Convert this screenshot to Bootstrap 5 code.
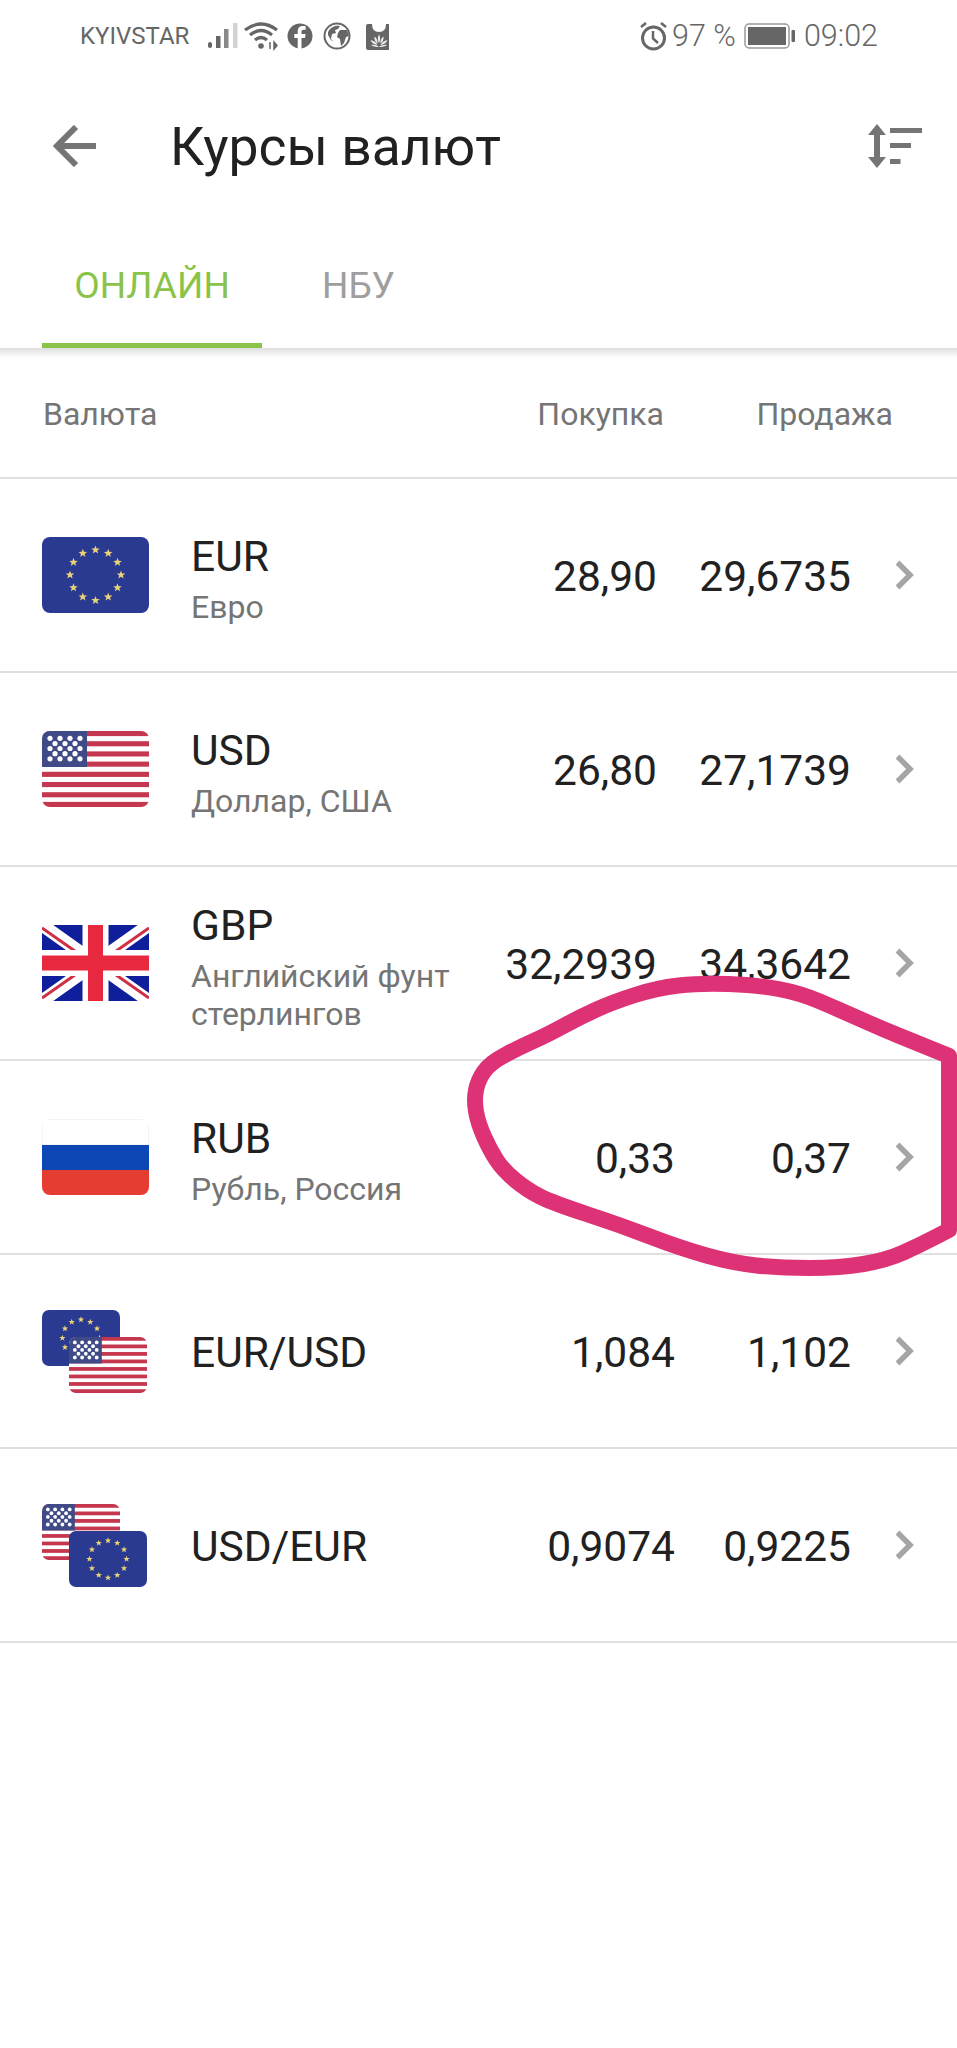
<!DOCTYPE html>
<html lang="ru">
<head>
  <meta charset="UTF-8" />
  <meta name="viewport" content="width=device-width, initial-scale=1.0" />
  <title>Курсы валют</title>
  <link href="https://cdn.jsdelivr.net/npm/bootstrap@5.3.2/dist/css/bootstrap.min.css" rel="stylesheet">
  <style>
    body {
      width: 957px;
      height: 2048px;
      overflow: hidden;
      position: relative;
      background: #fff;
      font-family: Roboto, "Liberation Sans", sans-serif;
      color: #212121;
    }
    .status-bar {
      height: 72px;
      padding: 0 79px 0 80px;
      color: #666;
      font-size: 30.5px;
      font-weight: 300;
    }
    .carrier { font-size: 24px; font-weight: 400; width: 120px; }
    .title-bar { height: 148px; padding: 0 35px 0 53px; }
    .title-text { font-size: 53.4px; font-weight: 400; margin: 0 0 0 74px; line-height: 1; padding-top: 2px; }
    .tab-strip {
      height: 128px;
      padding-left: 42px;
      position: relative;
    }
    .tab-strip::after {
      content: "";
      position: absolute;
      left: 0;
      right: 0;
      top: 100%;
      height: 10px;
      background: linear-gradient(rgba(0, 0, 0, .13), rgba(0, 0, 0, 0));
    }
    .tab-strip .nav-link {
      height: 128px;
      padding: 0;
      font-size: 37px;
      line-height: 132px;
      color: #9e9e9e;
    }
    .tab-strip .nav-link.active {
      width: 220px;
      text-align: center;
      color: #8bc34a;
      border-bottom: 5px solid #8bc34a;
      margin-right: 60px;
    }
    .head-row {
      height: 131px;
      padding: 3px 64px 0 43px;
      font-size: 32px;
      color: #757575;
      border-bottom: 2px solid #e0e0e0;
    }
    .head-buy { width: 130px; text-align: right; margin-right: 89px; }
    .head-sell { width: 140px; text-align: right; }
    .rate-list .list-group-item {
      height: 194px;
      padding: 0 43px 0 42px;
      border: 0;
      border-bottom: 2px solid #e0e0e0;
      color: #212121;
    }
    .rate-list .list-group-item:last-child { border-bottom-width: 2px; }
    .flag { display: block; width: 107px; height: 76px; border-radius: 8px; }
    .flag-gb { border-radius: 0; }
    .flag-wrap { width: 107px; flex: none; margin-right: 42px; }
    .flag-pair { display: grid; }
    .flag-pair .flag { grid-area: 1 / 1; width: 78px; height: 56px; border-radius: 7px; }
    .flag-pair .flag-front { margin: 27px 0 0 27px; }
    .cur-text { padding-top: 8px; }
    .cur-code { font-size: 42.5px; line-height: 48px; }
    .cur-name { font-size: 32px; line-height: 38px; color: #757575; margin-top: 7px; max-width: 280px; }
    .pair-code { padding-top: 4px; }
    .rate-buy { font-size: 42.5px; white-space: nowrap; padding-top: 4px; }
    .rate-sell { font-size: 42.5px; text-align: right; width: 176px; white-space: nowrap; padding-top: 4px; }
    .rate-sell-wide { width: 194px; }
    .chevron { width: 19px; height: 30px; margin-left: 44px; flex: none; }
    .scribble { position: absolute; left: 0; top: 0; pointer-events: none; }
    .defs-only { position: absolute; width: 0; height: 0; }
  </style>
</head>
<body>
  <svg class="defs-only">
    <defs>
      <polygon id="star" points="0,-4.500 1.100,-1.500 4.300,-1.400 1.800,.6 2.700,3.600 0,1.800 -2.700,3.600 -1.800,.6 -4.300,-1.400 -1.100,-1.500" fill="#ecd376"/>
      <circle id="dot" r="2.600" fill="#fff"/>
      <symbol id="eu" viewBox="0 0 107 76" preserveAspectRatio="none">
        <rect width="107" height="76" fill="#2a3a90"/>
        <g transform="translate(53.500 38)">
          <use href="#star" x="0" y="-25"/><use href="#star" x="12.700" y="-21.700"/><use href="#star" x="22" y="-12.700"/>
          <use href="#star" x="25.500" y="0"/><use href="#star" x="22" y="12.700"/><use href="#star" x="12.700" y="22"/>
          <use href="#star" x="0" y="25.500"/><use href="#star" x="-12.700" y="22"/><use href="#star" x="-22" y="12.700"/>
          <use href="#star" x="-25.500" y="0"/><use href="#star" x="-22" y="-12.700"/><use href="#star" x="-12.700" y="-21.700"/>
        </g>
      </symbol>
      <symbol id="us" viewBox="0 0 107 76" preserveAspectRatio="none">
        <rect width="107" height="76" fill="#fff"/>
        <g fill="#c5374f">
          <rect y="0" width="107" height="5.100"/><rect y="10.200" width="107" height="5.100"/><rect y="20.400" width="107" height="5.100"/>
          <rect y="30.600" width="107" height="5.100"/><rect y="40.800" width="107" height="5.100"/><rect y="51" width="107" height="5.100"/>
          <rect y="61.200" width="107" height="5.100"/><rect y="70.900" width="107" height="5.100"/>
        </g>
        <rect width="45" height="36" fill="#3f4a86"/>
        <use href="#dot" x="8" y="7.300"/><use href="#dot" x="18" y="7.300"/><use href="#dot" x="28" y="7.300"/><use href="#dot" x="38" y="7.300"/>
        <use href="#dot" x="13" y="12.500"/><use href="#dot" x="23" y="12.500"/><use href="#dot" x="33" y="12.500"/>
        <use href="#dot" x="8" y="17.500"/><use href="#dot" x="18" y="17.500"/><use href="#dot" x="28" y="17.500"/><use href="#dot" x="38" y="17.500"/>
        <use href="#dot" x="13" y="22.700"/><use href="#dot" x="23" y="22.700"/><use href="#dot" x="33" y="22.700"/>
        <use href="#dot" x="8" y="27.800"/><use href="#dot" x="18" y="27.800"/><use href="#dot" x="28" y="27.800"/><use href="#dot" x="38" y="27.800"/>
      </symbol>
      <symbol id="chev" viewBox="0 0 19 30">
        <path d="M2.500 2.500 15 15 2.500 27.500" fill="none" stroke="#a5a5a5" stroke-width="5.500"/>
      </symbol>
    </defs>
  </svg>

  <div class="status-bar d-flex align-items-center">
    <span class="carrier">KYIVSTAR</span>
    <svg class="ms-1" width="185" height="32" viewBox="0 0 185 32">
      <g fill="#666">
        <rect x="4" y="22" width="4" height="6" rx="2"/>
        <rect x="12" y="16" width="4.500" height="12"/>
      </g>
      <rect x="20" y="9" width="4.500" height="19" fill="#888"/>
      <rect x="29" y="3" width="4.500" height="25" fill="#d3d3d3"/>
      <g fill="none" stroke="#666" stroke-width="3.200">
        <path d="M41 10Q57-2 73 10"/>
        <path d="M46 15Q57 6 68 15"/>
        <path d="M51 20Q57 15 63 20"/>
      </g>
      <circle cx="57" cy="26" r="2.800" fill="#666"/>
      <path d="M66 22v7M70 22l3 3.500-3 3.500z" stroke="#666" stroke-width="1.500" fill="#666"/>
      <circle cx="96" cy="16" r="12.500" fill="#666"/>
      <path d="M97.500 29V18h3.500l.6-4h-4.100v-2.300c0-1.200.5-1.900 2-1.900h2.200V6.300c-.8-.1-1.900-.2-3-.2-3.200 0-5 1.900-5 5.100V14h-3.400v4h3.400v11z" fill="#fff"/>
      <circle cx="133" cy="16" r="12.500" fill="none" stroke="#666" stroke-width="2"/>
      <path d="M124 12c3-6 9-7 12-6l-2 3-3 1 1 3-4 1-1 5 3 3-3-2-3-5zM136 10l7 0 2 6-3 1-2 6-3 3-1-7-3-2 1-4z" fill="#666"/>
      <path d="M162 4h6q0 8 7 8t7-8h6q2 0 2 2v22q0 2-2 2h-24q-2 0-2-2V6q0-2 2-2z" fill="#666"/>
      <path d="M175 27c-3 0-6-.5-8-2 3-.5 6 .5 8 2 2-1.500 5-2.500 8-2-2 1.500-5 2-8 2zM173.500 25c-3-.5-6-2-7-5 3 .5 6 2.500 7 5zM176.500 25c3-.5 6-2 7-5-3 .5-6 2.500-7 5zM173.500 23.500c-2-1.500-3.500-3.500-3-7 2 1.500 3.500 4 3 7zM176.500 23.500c2-1.500 3.500-3.500 3-7-2 1.500-3.500 4-3 7zM175 23c-1.500-2.500-1.500-6 0-8.500 1.500 2.500 1.500 6 0 8.500z" fill="#eee"/>
    </svg>
    <div class="d-flex align-items-center ms-auto">
      <svg width="29" height="30" viewBox="0 0 29 30">
        <circle cx="14.500" cy="17" r="11" fill="none" stroke="#666" stroke-width="3"/>
        <path d="M14 10v7.500l5 4.500M2 6l5-4M27 6l-5-4" fill="none" stroke="#666" stroke-width="2.500"/>
      </svg>
      <span class="ms-1">97 %</span>
      <svg class="ms-2" width="52" height="26" viewBox="0 0 52 26">
        <rect x="1" y="1" width="44" height="24" rx="4" fill="none" stroke="#999" stroke-width="1.500"/>
        <rect x="4" y="4" width="38" height="18" fill="#666"/>
        <rect x="47.500" y="7" width="3.500" height="12" rx="1" fill="#666"/>
      </svg>
      <span class="ms-2">09:02</span>
    </div>
  </div>

  <div class="title-bar d-flex align-items-center">
    <svg width="43" height="42" viewBox="0 0 43 42">
      <path d="M43 21H5M23 2 4 21l19 19" fill="none" stroke="#757575" stroke-width="6"/>
    </svg>
    <h1 class="title-text">Курсы валют</h1>
    <svg class="ms-auto" width="54" height="46" viewBox="0 0 54 46">
      <path d="M9 1 18 12H12V34H18L9 45 0 34H6V12H0z" fill="#757575"/>
      <g fill="#757575">
        <rect x="22" y="5" width="32" height="5"/>
        <rect x="22" y="20" width="21" height="5"/>
        <rect x="22" y="36" width="10.500" height="5"/>
      </g>
    </svg>
  </div>

  <ul class="nav tab-strip">
    <li class="nav-item"><a class="nav-link active" href="#">ОНЛАЙН</a></li>
    <li class="nav-item"><a class="nav-link" href="#">НБУ</a></li>
  </ul>

  <div class="head-row d-flex align-items-center">
    <span class="me-auto">Валюта</span>
    <span class="head-buy">Покупка</span>
    <span class="head-sell">Продажа</span>
  </div>

  <ul class="list-group list-group-flush rate-list">
    <li class="list-group-item d-flex align-items-center">
      <div class="flag-wrap"><svg class="flag"><use href="#eu"/></svg></div>
      <div class="cur-text"><div class="cur-code">EUR</div><div class="cur-name">Евро</div></div>
      <span class="rate-buy ms-auto">28,90</span>
      <span class="rate-sell rate-sell-wide">29,6735</span>
      <svg class="chevron"><use href="#chev"/></svg>
    </li>
    <li class="list-group-item d-flex align-items-center">
      <div class="flag-wrap"><svg class="flag"><use href="#us"/></svg></div>
      <div class="cur-text"><div class="cur-code">USD</div><div class="cur-name">Доллар, США</div></div>
      <span class="rate-buy ms-auto">26,80</span>
      <span class="rate-sell rate-sell-wide">27,1739</span>
      <svg class="chevron"><use href="#chev"/></svg>
    </li>
    <li class="list-group-item d-flex align-items-center">
      <div class="flag-wrap">
        <svg class="flag flag-gb" viewBox="0 0 107 76" preserveAspectRatio="none">
          <rect width="107" height="76" fill="#0f1f9c"/>
          <path d="M0 0 107 76M107 0 0 76" stroke="#fff" stroke-width="13"/>
          <path d="M0 3 40 31M107 3 67 31M0 73 40 45M107 73 67 45" stroke="#cf2f45" stroke-width="3"/>
          <path d="M53.500 0V76M0 38H107" stroke="#fff" stroke-width="26"/>
          <path d="M53.500 0V76M0 38H107" stroke="#e8283f" stroke-width="15"/>
        </svg>
      </div>
      <div class="cur-text"><div class="cur-code">GBP</div><div class="cur-name">Английский фунт стерлингов</div></div>
      <span class="rate-buy ms-auto">32,2939</span>
      <span class="rate-sell rate-sell-wide">34,3642</span>
      <svg class="chevron"><use href="#chev"/></svg>
    </li>
    <li class="list-group-item d-flex align-items-center">
      <div class="flag-wrap">
        <svg class="flag" viewBox="0 0 107 76" preserveAspectRatio="none">
          <rect width="107" height="25" fill="#fff"/>
          <rect y="25" width="107" height="26" fill="#0d47b5"/>
          <rect y="51" width="107" height="25" fill="#e53d32"/>
          <rect x=".5" y=".5" width="106" height="25" fill="none" stroke="#f4f4f4"/>
        </svg>
      </div>
      <div class="cur-text"><div class="cur-code">RUB</div><div class="cur-name">Рубль, Россия</div></div>
      <span class="rate-buy ms-auto">0,33</span>
      <span class="rate-sell">0,37</span>
      <svg class="chevron"><use href="#chev"/></svg>
    </li>
    <li class="list-group-item d-flex align-items-center">
      <div class="flag-wrap flag-pair">
        <svg class="flag"><use href="#eu"/></svg>
        <svg class="flag flag-front"><use href="#us"/></svg>
      </div>
      <div class="cur-code pair-code">EUR/USD</div>
      <span class="rate-buy ms-auto">1,084</span>
      <span class="rate-sell">1,102</span>
      <svg class="chevron"><use href="#chev"/></svg>
    </li>
    <li class="list-group-item d-flex align-items-center">
      <div class="flag-wrap flag-pair">
        <svg class="flag"><use href="#us"/></svg>
        <svg class="flag flag-front"><use href="#eu"/></svg>
      </div>
      <div class="cur-code pair-code">USD/EUR</div>
      <span class="rate-buy ms-auto">0,9074</span>
      <span class="rate-sell">0,9225</span>
      <svg class="chevron"><use href="#chev"/></svg>
    </li>
  </ul>

  <!-- hand drawn mark over the RUB row -->
  <svg class="scribble" width="957" height="2048" viewBox="0 0 957 2048">
    <path id="mark" fill="none" stroke="#de3276" stroke-width="16" stroke-linejoin="round" stroke-linecap="round"/>
  </svg>

  <script src="https://cdn.jsdelivr.net/npm/bootstrap@5.3.2/dist/js/bootstrap.bundle.min.js"></script>
  <script>
    // smooth the traced points into one stroke
    const pts = [[949,1056],[917,1043],[880,1028],[840,1010],[800,993],[757,985],[700,983],[657,988],[613,1002],[580,1017],[547,1035],[520,1047],[490,1063],[478,1080],[474,1100],[478,1123],[490,1150],[503,1170],[527,1190],[553,1203],[620,1225],[680,1248],[733,1263],[780,1268],[840,1268],[887,1260],[920,1245],[949,1230]];
    let d = "M" + pts[0].join(" ");
    for (let i = 1; i < pts.length - 1; i++) {
      const mx = (pts[i][0] + pts[i + 1][0]) / 2;
      const my = (pts[i][1] + pts[i + 1][1]) / 2;
      d += " Q" + pts[i].join(" ") + " " + mx + " " + my;
    }
    d += " L949 1230 V1056";
    document.getElementById("mark").setAttribute("d", d);
  </script>
</body>
</html>
